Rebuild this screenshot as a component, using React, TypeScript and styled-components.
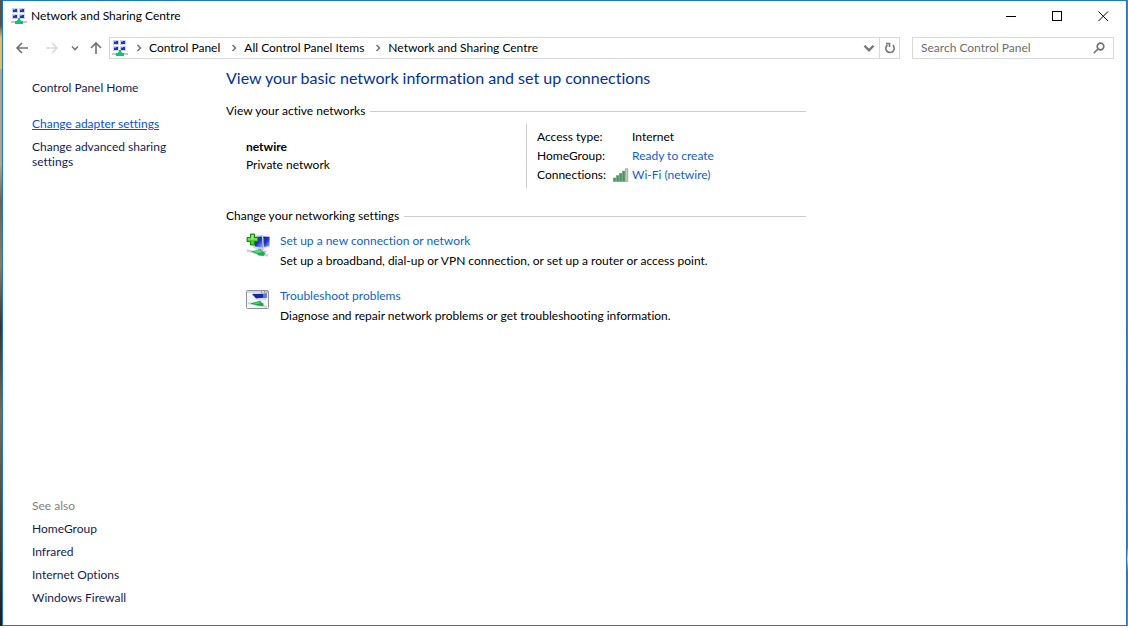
import React from "react";
import styled, { createGlobalStyle } from "styled-components";

const GlobalStyle = createGlobalStyle`
  * { box-sizing: border-box; }
  body { margin: 0; background: #fff; }
  body, button, input {
    font-family: Lato, "Open Sans", "Noto Sans", sans-serif;
    font-size: 12px;
    line-height: 16px;
    font-variant-ligatures: none;
    color: #000;
  }
  h1, h2, p, ul, dl, dd { margin: 0; padding: 0; font-weight: 400; }
  ul { list-style: none; }
  button { border: 0; padding: 0; background: none; }
  svg { display: block; flex: none; }
`;

const Desktop = styled.div`
  display: flex;
  flex-direction: column;
  min-height: 100vh;
  padding: 0 1px 2px 2px;
  background:
    linear-gradient(#fff, #fff) bottom / 100% 2px no-repeat,
    linear-gradient(#5a5048 0 4%, #e8bd5c 6% 11%, #b3a48e 11% 26%, #6e604c 32%, #8d7c63 42%, #3c332b 52%, #7a6a50 66%, #50422f 84%, #221c18 100%) left / 2px 100% no-repeat,
    linear-gradient(#777 0 50%, #89705a 87%, #bcd8ee 89%, #77685c 91%, #7c8790 100%) right / 1px 100% no-repeat;
`;

const Window = styled.div`
  flex: 1;
  display: flex;
  flex-direction: column;
  border: 1px solid #1979ca;
  background: #fff;
`;

const TitleBar = styled.header`
  display: flex;
  align-items: center;
  height: 30px;
  padding-left: 8px;
  gap: 4px;
`;

const WindowTitle = styled.span`
  flex: 1;
`;

const CaptionButton = styled.button`
  display: grid;
  place-items: center;
  width: 46px;
  height: 30px;
`;

const CaptionButtons = styled.div`
  display: flex;
  margin-left: auto;
`;

const Toolbar = styled.div`
  display: flex;
  align-items: center;
  padding: 6px 12px 0 4px;
`;

const NavButtons = styled.div`
  display: flex;
  align-items: center;
`;

const NavButton = styled.button<{ $width: number }>`
  display: grid;
  place-items: center;
  width: ${(p) => p.$width}px;
  height: 22px;
`;

const AddressBar = styled.nav`
  flex: 1;
  display: flex;
  align-items: center;
  height: 22px;
  border: 1px solid #d9d9d9;
  padding-left: 2px;
`;

const Crumbs = styled.ul`
  flex: 1;
  display: flex;
  align-items: center;
  gap: 3px;
  padding-bottom: 1px;
`;

const Crumb = styled.li`
  display: flex;
  align-items: center;

  a { color: #000; text-decoration: none; }
`;

const AddressButton = styled.button<{ $divided?: boolean }>`
  display: grid;
  place-items: center;
  width: 20px;
  height: 20px;
  border-left: ${(p) => (p.$divided ? "1px solid #d9d9d9" : "0")};
`;

const SearchBox = styled.form`
  display: flex;
  align-items: center;
  width: 202px;
  height: 22px;
  margin-left: 12px;
  padding: 0 8px;
  border: 1px solid #d9d9d9;
`;

const SearchInput = styled.input`
  flex: 1;
  min-width: 0;
  border: 0;
  padding: 0;
  outline: 0;
  background: none;

  &::placeholder { color: #6d6d6d; opacity: 1; }
`;

const Body = styled.div`
  flex: 1;
  display: flex;
`;

const Sidebar = styled.aside`
  display: flex;
  flex-direction: column;
  justify-content: space-between;
  width: 223px;
  padding: 21px 40px 20px 29px;
`;

const TaskList = styled.ul`
  display: flex;
  flex-direction: column;
  gap: 8px;
  line-height: 15px;
`;

const SideLink = styled.a<{ $active?: boolean }>`
  display: block;
  color: ${(p) => (p.$active ? "#0a4fe0" : "#151c55")};
  text-decoration: ${(p) => (p.$active ? "underline" : "none")};
`;

const HomeItem = styled.li`
  margin-bottom: 13px;
`;

const SeeAlso = styled.li`
  color: #808080;
`;

const Content = styled.main`
  flex: 0 1 580px;
  padding-top: 8px;
`;

const PageHeading = styled.h1`
  font-size: 16px;
  line-height: 22px;
  color: #003399;
`;

const SectionHeading = styled.h2`
  display: flex;
  align-items: center;
  gap: 5px;
  font-size: 12px;
  line-height: 16px;

  &::after {
    content: "";
    flex: 1;
    height: 1px;
    background: #ccc;
  }
`;

const Section = styled.section<{ $top: number }>`
  margin-top: ${(p) => p.$top}px;
`;

const ActiveNetwork = styled.div`
  display: flex;
  margin-top: 5px;
  padding-left: 20px;
`;

const NetworkName = styled.div`
  width: 280px;
  padding-top: 14px;
  line-height: 18px;
`;

const Details = styled.dl`
  display: grid;
  grid-template-columns: 76px auto;
  grid-auto-rows: 16px;
  row-gap: 3px;
  padding: 5px 0 5px 10px;
  border-left: 1px solid #ccc;

  dd { display: flex; align-items: center; gap: 3px; }
  dt { white-space: nowrap; }
`;

const IconSlot = styled.span`
  width: 16px;
`;

const Link = styled.a`
  color: #0e5fcd;
  text-decoration: none;
`;

const ActionList = styled.ul`
  display: flex;
  flex-direction: column;
  gap: 19px;
  padding: 9px 0 0 20px;
`;

const Action = styled.li`
  display: flex;
  gap: 10px;
`;

const ActionText = styled.div`
  display: flex;
  flex-direction: column;
  align-items: flex-start;
  gap: 4px;
`;

const CrumbArrow = styled.span`
  display: grid;
  place-items: center;
  width: 21px;
`;

function NetworkIcon() {
  const monitors = [[1, 0], [8, 0], [1, 6], [8, 6]];
  return (
    <svg width="16" height="16" viewBox="0 0 16 16" shapeRendering="crispEdges" aria-hidden="true">
      {monitors.map(([x, y]) => (
        <g key={`${x}-${y}`}>
          <rect x={x} y={y} width="6" height="5" fill="#c9d2e6" />
          <rect x={x + 1} y={y + 1} width="4" height="3" fill="#2634b8" />
          <rect x={x + 1} y={y + 1} width="2" height="1" fill="#7d93e6" />
        </g>
      ))}
      <rect x="0" y="13" width="16" height="2" fill="#c3c8c8" />
      <rect x="7" y="10" width="2" height="2" fill="#19b56b" />
      <rect x="6" y="12" width="4" height="1" fill="#19c477" />
      <rect x="4" y="13" width="8" height="3" fill="#0fc27a" />
    </svg>
  );
}

function Chevron({ down, size = 8 }: { down?: boolean; size?: number }) {
  return (
    <svg width={size} height={size} viewBox="0 0 8 8" fill="none" stroke="#767676" strokeWidth="1.6" aria-hidden="true">
      <path d={down ? "M1 2.5 4 5.5 7 2.5" : "M2.500 1 5.5 4 2.500 7"} />
    </svg>
  );
}

function Arrow({ d, color = "#707070" }: { d: string; color?: string }) {
  return (
    <svg width="14" height="14" viewBox="0 0 14 14" fill="none" stroke={color} strokeWidth="1.6" aria-hidden="true">
      <path d={d} />
    </svg>
  );
}

function SignalIcon() {
  return (
    <svg width="16" height="14" viewBox="0 0 16 14" aria-hidden="true">
      {[0, 1, 2, 3, 4].map((i) => (
        <rect
          key={i}
          x={i * 3 + 0.5}
          y={10 - i * 2.3}
          width="2.4"
          height={3.5 + i * 2.3}
          fill={i === 4 ? "#c4c8c4" : "#3f9a5a"}
          stroke={i === 4 ? "#8f958f" : "#78917c"}
          strokeWidth=".6"
        />
      ))}
    </svg>
  );
}

function NewConnectionIcon() {
  return (
    <svg width="24" height="24" viewBox="0 0 24 24" aria-hidden="true">
      <defs>
        <linearGradient id="screen" x1="0" y1="0" x2="1" y2="1">
          <stop offset="0" stopColor="#0a1a98" />
          <stop offset=".55" stopColor="#2238c4" />
          <stop offset="1" stopColor="#a9bdf4" />
        </linearGradient>
      </defs>
      <path d="M14 2.500 24 3v11l-7 1.500z" fill="#d3d9e6" />
      <path d="M16 3.500 23.500 4v9l-6 1z" fill="url(#screen)" />
      <path d="M5 3 17 2.500 18 16.500 8 15z" fill="#dfe4ee" stroke="#aab2c4" strokeWidth=".5" />
      <path d="M6 4 16 3.500 17 15 9 13.500z" fill="url(#screen)" />
      <path d="M12 15.500h5v2l4 .5-1 1.500H10z" fill="#b9bfc9" />
      <path d="M1 17.500 22 22.500" stroke="#cdd1d6" strokeWidth="2.500" />
      <path d="M5 18.500 15 16l-.5 1.500 5 2.500-2 3-5-.5L11 21z" fill="#1fae58" />
      <path d="M8 18.200 13.500 17.200l2 2-4 .500z" fill="#65df8d" />
      <path d="M4.500 1h4v3.500H12v4H8.500V12h-4V8.500H1v-4h3.500z" fill="#4dcc32" stroke="#16860f" />
      <path d="M5.500 2h2v3.500H11v1H2v-1h3.500z" fill="#a8f08a" />
    </svg>
  );
}

function TroubleshootIcon() {
  return (
    <svg width="24" height="24" viewBox="0 0 24 24" aria-hidden="true">
      <rect x=".5" y="2.500" width="22" height="18" rx="1" fill="#f5f6f8" stroke="#8e939b" />
      <path d="M1 3h21v2H1z" fill="#d5d8df" />
      <path d="M15 4h1M18 4h1M20.500 4h1" stroke="#4d5665" />
      <path d="M6 6 21 5.500V9.500l-11 1z" fill="#1529a6" />
      <path d="M17 6h4v3.300l-4 .4z" fill="#5f7add" />
      <path d="M9 11.300 20 10.300v1.500z" fill="#c5cad5" />
      <path d="M2 15 21 19" stroke="#d0d4da" strokeWidth="2" />
      <path d="M4 15.500 15 12.500l-.5 1.500 3 1.500v2.500l-5-.3-3.500-1z" fill="#15a34c" />
      <path d="M7 15.200 13 13.800l1.500 1.800-4 .4z" fill="#4fd17c" />
    </svg>
  );
}

const crumbs = ["Control Panel", "All Control Panel Items", "Network and Sharing Centre"];
const related = ["HomeGroup", "Infrared", "Internet Options", "Windows Firewall"];

export default function App() {
  return (
    <Desktop>
      <GlobalStyle />
      <Window>
        <TitleBar>
          <NetworkIcon />
          <WindowTitle>Network and Sharing Centre</WindowTitle>
          <CaptionButtons>
            <CaptionButton aria-label="Minimise">
              <svg width="11" height="11" stroke="#000" shapeRendering="crispEdges"><path d="M0 5.500h10" /></svg>
            </CaptionButton>
            <CaptionButton aria-label="Maximise">
              <svg width="11" height="11" stroke="#000" fill="none" shapeRendering="crispEdges"><path d="M.5.500h9v9h-9z" /></svg>
            </CaptionButton>
            <CaptionButton aria-label="Close">
              <svg width="11" height="11" stroke="#000" strokeWidth="1"><path d="M.5.500l9.500 9.500M10 .500l-9.500 9.500" /></svg>
            </CaptionButton>
          </CaptionButtons>
        </TitleBar>

        <Toolbar>
          <NavButtons>
            <NavButton $width={30} aria-label="Back"><Arrow d="M13 7H2M7 2 2 7l5 5" /></NavButton>
            <NavButton $width={30} aria-label="Forward"><Arrow color="#d9d9d9" d="M1 7h11M7 2l5 5-5 5" /></NavButton>
            <NavButton $width={16} aria-label="Recent locations"><Chevron down /></NavButton>
            <NavButton $width={26} aria-label="Up"><Arrow d="M7 13V2M2 7l5-5 5 5" /></NavButton>
          </NavButtons>
          <AddressBar aria-label="Address">
            <NetworkIcon />
            <Crumbs>
              {crumbs.map((name) => (
                <Crumb key={name}>
                  <CrumbArrow><Chevron /></CrumbArrow>
                  <a href="#">{name}</a>
                </Crumb>
              ))}
            </Crumbs>
            <AddressButton aria-label="Previous locations"><Chevron down size={12} /></AddressButton>
            <AddressButton $divided aria-label="Refresh">
              <svg width="12" height="12" viewBox="0 0 12 12" fill="none" stroke="#767676" strokeWidth="1.600">
                <path d="M3.500 3A4.200 4.200 0 1 0 8.800 3.200M2 1.500h3.500V5" />
              </svg>
            </AddressButton>
          </AddressBar>
          <SearchBox role="search">
            <SearchInput aria-label="Search Control Panel" placeholder="Search Control Panel" />
            <svg width="12" height="12" viewBox="0 0 12 12" fill="none" stroke="#767676" strokeWidth="1.700" aria-hidden="true">
              <circle cx="7.500" cy="4.500" r="3.300" />
              <path d="M5 7 .8 11.200" />
            </svg>
          </SearchBox>
        </Toolbar>

        <Body>
          <Sidebar>
            <TaskList>
              <HomeItem><SideLink href="#">Control Panel Home</SideLink></HomeItem>
              <li><SideLink href="#" $active>Change adapter settings</SideLink></li>
              <li><SideLink href="#">Change advanced sharing settings</SideLink></li>
            </TaskList>
            <TaskList>
              <SeeAlso>See also</SeeAlso>
              {related.map((name) => (
                <li key={name}><SideLink href="#">{name}</SideLink></li>
              ))}
            </TaskList>
          </Sidebar>

          <Content>
            <PageHeading>View your basic network information and set up connections</PageHeading>

            <Section $top={14}>
              <SectionHeading>View your active networks</SectionHeading>
              <ActiveNetwork>
                <NetworkName>
                  <strong>netwire</strong>
                  <p>Private network</p>
                </NetworkName>
                <Details>
                  <dt>Access type:</dt>
                  <dd><IconSlot />Internet</dd>
                  <dt>HomeGroup:</dt>
                  <dd><IconSlot /><Link href="#">Ready to create</Link></dd>
                  <dt>Connections:</dt>
                  <dd><SignalIcon /><Link href="#">Wi-Fi (netwire)</Link></dd>
                </Details>
              </ActiveNetwork>
            </Section>

            <Section $top={20}>
              <SectionHeading>Change your networking settings</SectionHeading>
              <ActionList>
                <Action>
                  <NewConnectionIcon />
                  <ActionText>
                    <Link href="#">Set up a new connection or network</Link>
                    <p>Set up a broadband, dial-up or VPN connection, or set up a router or access point.</p>
                  </ActionText>
                </Action>
                <Action>
                  <TroubleshootIcon />
                  <ActionText>
                    <Link href="#">Troubleshoot problems</Link>
                    <p>Diagnose and repair network problems or get troubleshooting information.</p>
                  </ActionText>
                </Action>
              </ActionList>
            </Section>
          </Content>
        </Body>
      </Window>
    </Desktop>
  );
}
